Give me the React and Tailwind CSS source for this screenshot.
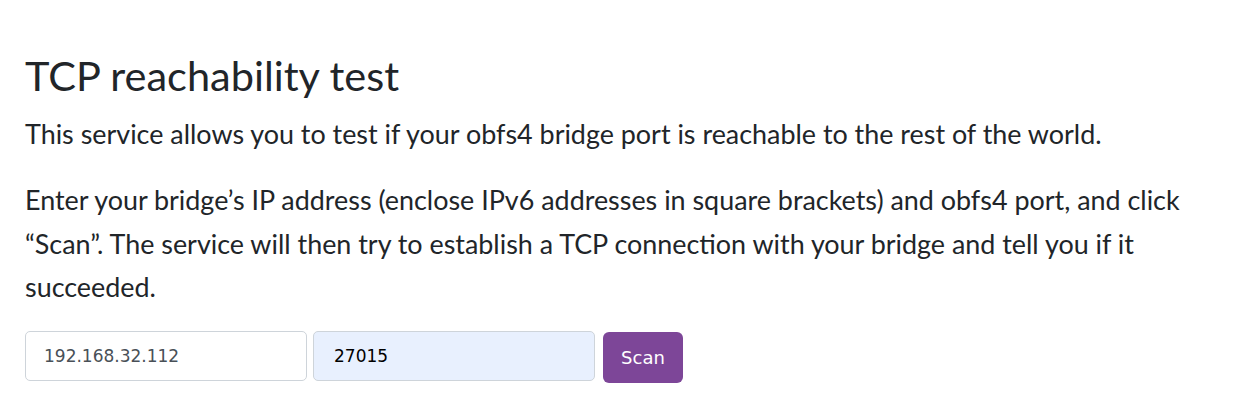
export default function App() {
  return (
    <div className="w-[1240px] h-[410px] bg-white px-[25px] pt-[50px]" style={{ fontFamily: "Lato, 'Noto Sans', sans-serif" }}>
      <h1 className="text-[41.5px] leading-[50px] text-[#212529] mb-[12px]">TCP reachability test</h1>
      <p className="text-[26.9px] leading-[44px] text-[#212529] mb-[22px]">
        This service allows you to test if your obfs4 bridge port is reachable to the rest of the world.
      </p>
      <p className="text-[26.9px] leading-[43.5px] text-[#212529] mb-[22px] w-[1190px]">
        Enter your bridge’s IP address (enclose IPv6 addresses in square brackets) and obfs4 port, and click “Scan”. The service will then try to establish a TCP connection with your bridge and tell you if it succeeded.
      </p>
      <div className="flex items-start gap-[6px]" style={{ fontFamily: "'DejaVu Sans', 'Liberation Sans', sans-serif" }}>
        <input
          defaultValue="192.168.32.112"
          className="w-[282px] h-[50px] border border-[#ced4da] rounded-[5px] px-[18px] text-[17px] text-[#495057] outline-none"
        />
        <input
          defaultValue="27015"
          className="w-[282px] h-[50px] border border-[#ced4da] rounded-[5px] px-[20px] bg-[#e8f0fe] text-[17px] text-black outline-none"
        />
        <button className="mt-[1px] ml-[2px] w-[80px] h-[51px] rounded-[6px] bg-[#7d4698] text-white text-[18px]">Scan</button>
      </div>
    </div>
  );
}
